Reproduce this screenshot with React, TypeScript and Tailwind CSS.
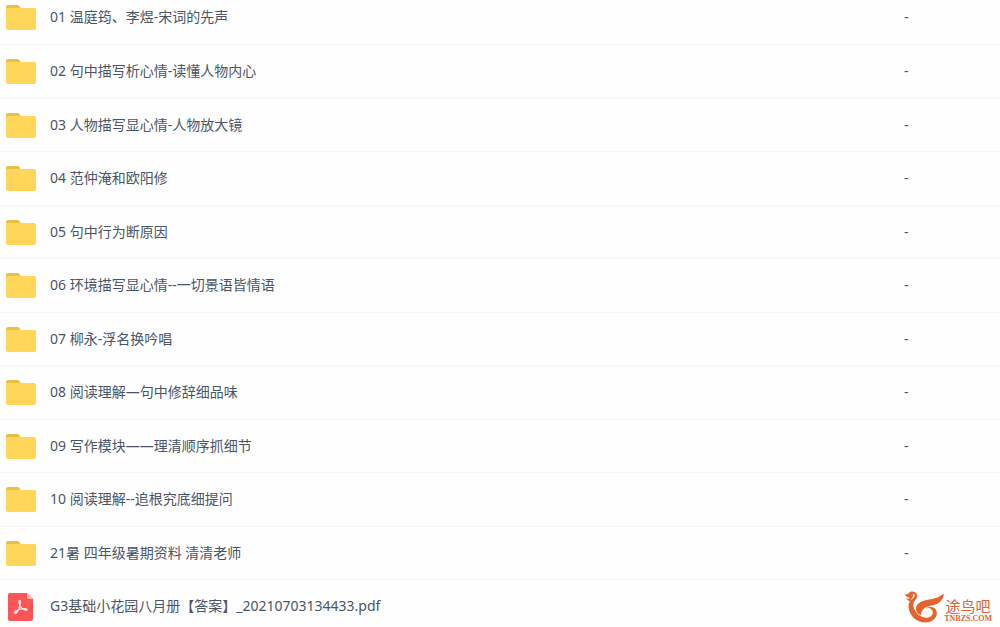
type Entry = { name: string; kind: "folder" | "pdf"; size: string };

const entries: Entry[] = [
  { name: "01 温庭筠、李煜-宋词的先声", kind: "folder", size: "-" },
  { name: "02 句中描写析心情-读懂人物内心", kind: "folder", size: "-" },
  { name: "03 人物描写显心情-人物放大镜", kind: "folder", size: "-" },
  { name: "04 范仲淹和欧阳修", kind: "folder", size: "-" },
  { name: "05 句中行为断原因", kind: "folder", size: "-" },
  { name: "06 环境描写显心情--一切景语皆情语", kind: "folder", size: "-" },
  { name: "07 柳永-浮名换吟唱", kind: "folder", size: "-" },
  { name: "08 阅读理解—句中修辞细品味", kind: "folder", size: "-" },
  { name: "09 写作模块——理清顺序抓细节", kind: "folder", size: "-" },
  { name: "10 阅读理解--追根究底细提问", kind: "folder", size: "-" },
  { name: "21暑 四年级暑期资料 清清老师", kind: "folder", size: "-" },
  { name: "G3基础小花园八月册【答案】_20210703134433.pdf", kind: "pdf", size: "" },
];

function FolderIcon() {
  return (
    <svg viewBox="0 0 32 32" className="size-8" aria-hidden="true">
      <path d="M1 6a2 2 0 0 1 2-2h9.500a2 2 0 0 1 1.600.8L16 7.500V12H1z" fill="#e9c043" />
      <path d="M1 8.500A1.500 1.500 0 0 1 2.500 7H29a2 2 0 0 1 2 2v18a2 2 0 0 1-2 2H3a2 2 0 0 1-2-2z" fill="#ffd659" />
    </svg>
  );
}

function PdfIcon() {
  return (
    <svg viewBox="0 0 32 32" className="size-8" aria-hidden="true">
      <path d="M5 3h17l6 6v20a2 2 0 0 1-2 2H5a2 2 0 0 1-2-2V5a2 2 0 0 1 2-2z" fill="#fc5558" />
      <path d="M22 3l6 6h-4a2 2 0 0 1-2-2z" fill="#ffb9ba" />
      <path
        d="M14.500 10.500c1.600 0 .8 3.600.2 5.800-.9 3-2.900 7.200-4.700 7.200-1.800-.6 1.200-3.200 4.600-4.200 3.600-1 7.800-.9 7.500.5-.4 1.300-4.300-.1-6.200-2.600-1.500-2-2.700-6.400-1.400-6.700z"
        fill="none"
        stroke="#ffe4e4"
        strokeWidth="1.300"
        strokeLinejoin="round"
      />
    </svg>
  );
}

function BirdMark() {
  return (
    <svg viewBox="10 18 120 96" className="h-8 w-10" fill="#e8622d" aria-hidden="true">
      <path d="M12 27C17 29 22 28 25 24C31 17 44 19 48 27C53 37 45 43 40 51C36 59 38 68 43 76C49 88 63 100 81 98C96 95 101 81 92 73C88 69 81 68 75 71C83 64 98 64 105 73C115 88 103 109 80 112C51 115 27 94 24 68C23 61 24 54 28 48C23 48 19 45 17 40C21 42 25 42 29 38C23 39 16 36 12 27Z" />
      <path d="M47 77C42 57 61 47 82 44C101 42 118 37 129 25C130 43 116 57 97 61C74 64 62 73 61 91C54 88 49 83 47 77Z" />
      <path d="M38 27C43 27 44 33 40 37C37 40 34 43 32 46C31 41 36 38 37 34C37 31 35 29 38 27Z" fill="#fefefe" />
    </svg>
  );
}

export default function App() {
  return (
    <main className="relative h-screen overflow-hidden bg-[#fefefe] font-['Noto_Sans','Noto_Sans_CJK_SC',sans-serif] text-sm text-[#4a5568]">
      <table className="-mt-[9px] w-full table-fixed border-collapse" aria-label="文件列表">
        <tbody>
          {entries.map((entry) => (
            <tr key={entry.name} className="h-[53px] border-b border-[#f5f5f7] even:h-[54px]">
              <td className="p-0 pl-[5px]">
                <a href="#" className="flex items-center gap-[13px] leading-5">
                  {entry.kind === "folder" ? <FolderIcon /> : <PdfIcon />}
                  <span>{entry.name}</span>
                </a>
              </td>
              <td className="w-24 p-0 leading-5">{entry.size}</td>
            </tr>
          ))}
        </tbody>
      </table>
      <div className="absolute right-2 bottom-1 flex items-end text-[#e0633a]">
        <BirdMark />
        <div className="flex flex-col items-center">
          <span className="text-[15px] leading-[18px]">途鸟吧</span>
          <span className="font-['Liberation_Serif',serif] text-[8px] leading-2 font-bold">TNBZS.COM</span>
        </div>
      </div>
    </main>
  );
}
